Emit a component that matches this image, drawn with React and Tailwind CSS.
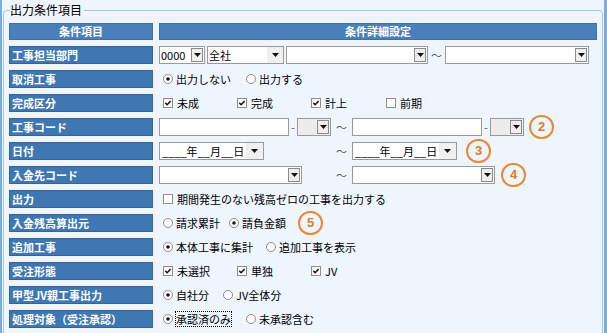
import React from "react";

const JP = "font-['Noto_Sans_CJK_JP',sans-serif]";

function Tri() {
  return (
    <svg width="7" height="4" viewBox="0 0 7 4">
      <path d="M0 0 H7 L3.5 4 Z" fill="#111" />
    </svg>
  );
}

function Select({ className = "", text = "", gray, flat }) {
  return (
    <div
      className={`h-[18px] border border-[#9a9a9a] flex items-center shrink-0 ${gray ? "bg-[#ececec]" : "bg-white"} ${className}`}
    >
      <span className="flex-1 pl-[1px] text-[11px] leading-[16px] truncate">{text}</span>
      {flat ? (
        <span className="w-[16px] h-[16px] bg-[#f0f0f0] flex items-center justify-center">
          <Tri />
        </span>
      ) : (
        <span className="w-[12px] h-[14px] mr-[1px] border border-[#8a8a8a] bg-[#eeeeee] flex items-center justify-center">
          <Tri />
        </span>
      )}
    </div>
  );
}

function DateBox() {
  return (
    <div className="h-[18px] w-[105px] border border-[#9a9a9a] bg-white flex items-center shrink-0">
      <span className="flex-1 pl-[2px] text-[11px] leading-[16px]">____年__月__日</span>
      <span className="w-[17px] h-[16px] bg-[#f0f0f0] flex items-center justify-center">
        <Tri />
      </span>
    </div>
  );
}

function Input({ className = "" }) {
  return <div className={`h-[18px] border border-[#9a9a9a] bg-white shrink-0 ${className}`} />;
}

function Radio({ on, children, className = "", focus }) {
  return (
    <div className={`flex items-center gap-[3px] shrink-0 ${className}`}>
      <svg width="10" height="10" viewBox="0 0 10 10">
        <circle cx="5" cy="5" r="4.5" fill="white" stroke="#8b8b8b" />
        {on && <circle cx="5" cy="5" r="1.8" fill="#1a1a1a" />}
      </svg>
      <span className={`text-[11px] leading-[14px] ${focus ? "outline outline-1 outline-dotted outline-black" : ""}`}>
        {children}
      </span>
    </div>
  );
}

function Check({ on, children, className = "" }) {
  return (
    <div className={`flex items-center gap-[4px] shrink-0 ${className}`}>
      <svg width="10" height="10" viewBox="0 0 10 10">
        <rect x="0.5" y="0.5" width="9" height="9" fill="white" stroke="#8e8e8e" />
        {on && <path d="M2.3 4.9 L4.2 6.7 L7.6 3" stroke="#111" strokeWidth="1.5" fill="none" />}
      </svg>
      <span className="text-[11px] leading-[14px]">{children}</span>
    </div>
  );
}

function Tilde({ className = "" }) {
  return <span className={`text-[11px] text-center text-[#555] shrink-0 ${className}`}>～</span>;
}

function Mark({ n, className = "" }) {
  return (
    <div
      className={`w-[25px] h-[24px] shrink-0 rounded-full border-2 border-[#e6893a] flex items-center justify-center text-[13px] font-bold text-[#e07b25] font-['Liberation_Sans',sans-serif] ${className}`}
    >
      {n}
    </div>
  );
}

function Row({ label, children }) {
  return (
    <div className="flex h-[18px] gap-[6px]">
      <div className="w-[144px] shrink-0 bg-[#3f77b2] border border-[#31659b] text-white font-bold text-[11px] leading-[16px] pl-[2px] flex items-center">
        {label}
      </div>
      <div className="flex-1 flex items-center">{children}</div>
    </div>
  );
}

export default function App() {
  return (
    <div className={`w-[607px] h-[333px] overflow-hidden bg-[#eef5fc] border-l-2 border-r-[3px] border-[#78ade2] text-black ${JP}`}>
      <fieldset className="ml-[1px] mr-[1px] mt-[3px] border border-[#a9c5e1] rounded-[4px] px-[5px] pb-4">
        <legend className="ml-[1px] pr-[2px] text-[12px] leading-[14px]">出力条件項目</legend>

        <div className="mt-[6px] flex gap-[6px] h-[17px]">
          <div className="w-[144px] bg-[#4a80b9] border border-[#3c70a6] text-white font-bold text-[11px] flex items-center justify-center">
            条件項目
          </div>
          <div className="flex-1 bg-[#4a80b9] border border-[#3c70a6] text-white font-bold text-[11px] flex items-center justify-center">
            条件詳細設定
          </div>
        </div>

        <div className="mt-[6px] flex flex-col gap-[6px]">
          <Row label="工事担当部門">
            <Select className="w-[46px]" text="0000" />
            <Select className="w-[77px] ml-[2px]" text="全社" flat />
            <Select className="w-[142px] ml-[2px]" />
            <Tilde className="w-[17px]" />
            <Select className="w-[144px]" />
          </Row>

          <Row label="取消工事">
            <div className="pl-[4px] flex items-center">
              <Radio on className="w-[83px]">出力しない</Radio>
              <Radio>出力する</Radio>
            </div>
          </Row>

          <Row label="完成区分">
            <div className="pl-[4px] flex items-center">
              <Check on className="w-[74px]">未成</Check>
              <Check on className="w-[74px]">完成</Check>
              <Check on className="w-[75px]">計上</Check>
              <Check>前期</Check>
            </div>
          </Row>

          <Row label="工事コード">
            <Input className="w-[130px]" />
            <span className="w-[8px] text-center text-[11px] text-[#555] shrink-0">-</span>
            <Select className="w-[34px]" gray />
            <Tilde className="w-[21px]" />
            <Input className="w-[130px]" />
            <span className="w-[8px] text-center text-[11px] text-[#555] shrink-0">-</span>
            <Select className="w-[34px]" gray />
            <Mark n="2" className="ml-[5px]" />
          </Row>

          <Row label="日付">
            <DateBox />
            <Tilde className="w-[21px] ml-[67px]" />
            <DateBox />
            <Mark n="3" className="ml-[9px]" />
          </Row>

          <Row label="入金先コード">
            <Select className="w-[143px]" />
            <Tilde className="w-[21px] ml-[29px]" />
            <Select className="w-[143px]" />
            <Mark n="4" className="ml-[6px]" />
          </Row>

          <Row label="出力">
            <div className="pl-[4px] flex items-center">
              <Check>期間発生のない残高ゼロの工事を出力する</Check>
            </div>
          </Row>

          <Row label="入金残高算出元">
            <div className="pl-[4px] flex items-center">
              <Radio className="w-[66px]">請求累計</Radio>
              <Radio on>請負金額</Radio>
              <Mark n="5" className="ml-[12px]" />
            </div>
          </Row>

          <Row label="追加工事">
            <div className="pl-[4px] flex items-center">
              <Radio on className="w-[103px]">本体工事に集計</Radio>
              <Radio>追加工事を表示</Radio>
            </div>
          </Row>

          <Row label="受注形態">
            <div className="pl-[4px] flex items-center">
              <Check on className="w-[74px]">未選択</Check>
              <Check on className="w-[74px]">単独</Check>
              <Check on>JV</Check>
            </div>
          </Row>

          <Row label="甲型JV親工事出力">
            <div className="pl-[4px] flex items-center">
              <Radio on className="w-[60px]">自社分</Radio>
              <Radio>JV全体分</Radio>
            </div>
          </Row>

          <Row label="処理対象（受注承認）">
            <div className="pl-[4px] flex items-center">
              <Radio on focus className="w-[83px]">承認済のみ</Radio>
              <Radio>未承認含む</Radio>
            </div>
          </Row>
        </div>
      </fieldset>
    </div>
  );
}
